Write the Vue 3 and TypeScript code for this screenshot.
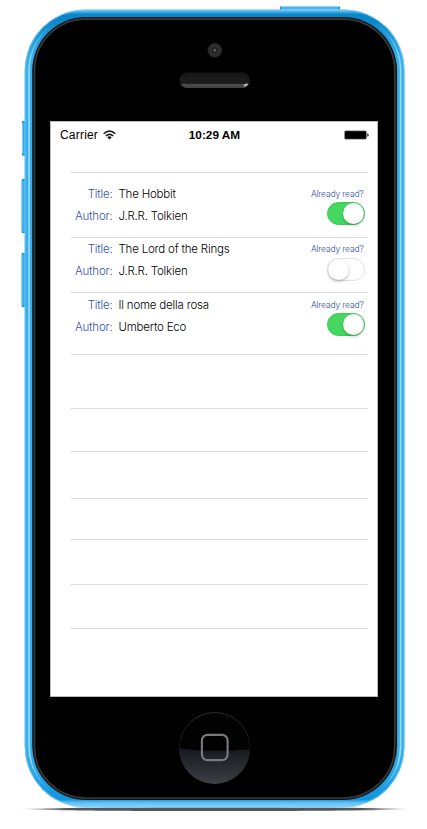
<script setup lang="ts">
interface Book {
  title: string
  author: string
  read: boolean
  height: number
}

const books: Book[] = [
  { title: 'The Hobbit', author: 'J.R.R. Tolkien', read: true, height: 65 },
  { title: 'The Lord of the Rings', author: 'J.R.R. Tolkien', read: false, height: 55 },
  { title: 'Il nome della rosa', author: 'Umberto Eco', read: true, height: 62 },
]

const emptyRows: number[] = [54, 43, 47, 41, 45, 44]
</script>

<template>
  <main class="device">
    <svg class="shell" width="427" height="829" viewBox="0 0 427 829" aria-hidden="true">
      <defs>
        <linearGradient id="edge" x1="0" y1="0" x2="0" y2="1">
          <stop offset="0" stop-color="#7fcff6" />
          <stop offset="0.006" stop-color="#0988cd" />
          <stop offset="0.012" stop-color="#0a85c8" />
          <stop offset="0.06" stop-color="#35aeea" />
          <stop offset="0.93" stop-color="#35aeea" />
          <stop offset="0.99" stop-color="#1295dc" />
          <stop offset="0.994" stop-color="#5fc0f4" />
          <stop offset="1" stop-color="#8dd4fa" />
        </linearGradient>
        <linearGradient id="shine" x1="0" y1="0" x2="0" y2="1">
          <stop offset="0.012" stop-color="#9bdafc" stop-opacity="0" />
          <stop offset="0.07" stop-color="#9bdafc" />
          <stop offset="0.94" stop-color="#9bdafc" />
          <stop offset="0.985" stop-color="#9bdafc" stop-opacity="0" />
        </linearGradient>
        <linearGradient id="ground" x1="0" y1="0" x2="1" y2="0">
          <stop offset="0" stop-color="#555" stop-opacity="0" />
          <stop offset="0.13" stop-color="#555" />
          <stop offset="0.87" stop-color="#555" />
          <stop offset="1" stop-color="#555" stop-opacity="0" />
        </linearGradient>
        <linearGradient id="gloss" x1="0" y1="0" x2="0" y2="1">
          <stop offset="0" stop-color="#15181c" />
          <stop offset="1" stop-color="#3c4045" />
        </linearGradient>
        <linearGradient id="rim" x1="0" y1="0" x2="0" y2="1">
          <stop offset="0" stop-color="#383838" />
          <stop offset="0.45" stop-color="#171717" />
          <stop offset="1" stop-color="#3c4045" />
        </linearGradient>
        <linearGradient id="slot" x1="0" y1="0" x2="0" y2="1">
          <stop offset="0" stop-color="#151515" />
          <stop offset="0.7" stop-color="#1c1c1c" />
          <stop offset="0.76" stop-color="#4c4c4c" />
          <stop offset="1" stop-color="#404040" />
        </linearGradient>
        <radialGradient id="lens">
          <stop offset="0" stop-color="#777" />
          <stop offset="0.18" stop-color="#444" />
          <stop offset="0.34" stop-color="#151515" />
          <stop offset="0.5" stop-color="#333" />
          <stop offset="1" stop-color="#252525" />
        </radialGradient>
        <pattern id="mesh" width="2" height="2" patternUnits="userSpaceOnUse">
          <rect width="2" height="2" fill="#111" />
          <rect width="1" height="1" fill="#252525" />
          <rect x="1" y="1" width="1" height="1" fill="#252525" />
        </pattern>
        <filter id="soft" x="-5%" y="-100%" width="110%" height="300%">
          <feGaussianBlur stdDeviation="1 0.7" />
        </filter>
      </defs>

      <path d="M18 809 C60 806.5 370 806.5 412 809 C370 811.8 60 811.8 18 809Z" fill="url(#ground)" filter="url(#soft)" />

      <g fill="#35aeea">
        <rect x="280" y="6" width="60" height="6" rx="1" fill="#48b6ec" />
        <path d="M281 6.500H339" stroke="#8ed6f8" />
        <path d="M280.500 7V10M339.500 7V10" stroke="#168dca" />
        <rect x="22" y="121" width="5" height="34.500" rx="1" />
        <rect x="21.500" y="179" width="5.500" height="54" rx="1" />
        <rect x="21.500" y="253" width="5.500" height="54" rx="1" />
        <path d="M22.500 124V153M22 182V230M22 256V304" stroke="#74caf4" />
        <path d="M22 121.500H25M22 155H25M22 179.500H25M22 232.500H25M22 253.500H25M22 306.500H25" stroke="#1a94d6" />
      </g>

      <rect x="24.700" y="9.500" width="379.800" height="798" rx="61" fill="url(#edge)" />
      <rect x="25.100" y="9.900" width="379" height="797.200" rx="60.500" fill="none" stroke="#7ccdf6" stroke-width="0.800" />
      <rect x="29.100" y="13.800" width="371.500" height="789.500" rx="57" fill="none" stroke="url(#shine)" stroke-width="1.600" />
      <rect x="32.200" y="17" width="364.900" height="783" rx="54" fill="#10151a" />
      <rect x="34.500" y="19.100" width="360.200" height="778.900" rx="51.500" fill="#000" stroke="#383838" stroke-width="1.600" />

      <circle cx="214.800" cy="50.300" r="7.300" fill="url(#lens)" />
      <rect x="179.500" y="72.500" width="70.500" height="15.500" rx="7.750" fill="url(#slot)" />
      <rect x="184" y="77" width="62" height="6.500" rx="3" fill="url(#mesh)" />
      <path d="M243.800 85.800Q246.500 85.500 247.300 83.800" fill="none" stroke="#aaa" stroke-width="2.600" />

      <circle cx="214.600" cy="747.800" r="35.300" fill="#020202" stroke="url(#rim)" stroke-width="0.800" />
      <path d="M179.300 748.500Q215 753 249.900 748.900A35.300 35.300 0 0 1 179.300 748.500Z" fill="url(#gloss)" />
      <rect x="201.900" y="734.900" width="25.700" height="25.200" rx="5.500" fill="none" stroke="#777b7e" stroke-width="2.100" />
    </svg>

    <section class="screen">
      <header class="status">
        <div class="carrier">
          <span>Carrier</span>
          <svg width="13" height="10" viewBox="0 0 13 10" fill="none" stroke="#111" stroke-width="1.500">
            <path d="M0.700 3.800Q6.500 -1.700 12.300 3.800M2.800 6Q6.500 2.700 10.200 6" />
            <path d="M4.300 7.300Q6.500 5.400 8.700 7.300L6.500 9.500Z" fill="#111" stroke="none" />
          </svg>
        </div>
        <time class="clock">10:29 AM</time>
        <svg class="battery" width="25" height="10" viewBox="0 0 25 10">
          <rect x="0.200" y="0.500" width="22.600" height="9" rx="1.500" fill="#777" />
          <rect x="1" y="1.200" width="21" height="7.600" rx="0.700" fill="#000" />
          <path d="M23.300 3.200Q24.700 3.600 24.700 5T23.300 6.800Z" fill="#111" />
        </svg>
      </header>

      <div class="list">
        <article v-for="book in books" :key="book.title" class="row" :style="{ height: book.height + 'px' }">
          <dl class="details">
            <dt>Title:</dt>
            <dd>{{ book.title }}</dd>
            <dt>Author:</dt>
            <dd>{{ book.author }}</dd>
          </dl>
          <div class="read">
            <span>Already read?</span>
            <div class="switch" :class="{ on: book.read }"><i class="knob" /></div>
          </div>
        </article>
        <div v-for="(height, index) in emptyRows" :key="index" class="row" :style="{ height: height + 'px' }" />
      </div>
    </section>
  </main>
</template>

<style>
body {
  background: #fff;
}
</style>

<style scoped>
.device {
  display: grid;
  width: 427px;
  height: 829px;
  overflow: hidden;
  font-family: Inter, "Liberation Sans", sans-serif;
}

.shell,
.screen {
  grid-area: 1 / 1;
}

.shell {
  display: block;
}

.screen {
  box-sizing: border-box;
  width: 328px;
  height: 576px;
  margin: 121px 0 0 50px;
  background: #fff;
  border: 1px solid #b8b8b8;
}

.status {
  display: grid;
  grid-template-columns: 1fr auto 1fr;
  align-items: center;
  height: 20px;
  margin-top: 3px;
  padding: 0 8px 0 9px;
  color: #000;
}

.carrier {
  display: flex;
  align-items: center;
  gap: 5px;
  font: 12px/20px "Liberation Sans", sans-serif;
  letter-spacing: 0.200px;
}

.clock {
  font: bold 11.800px/20px "Liberation Sans", sans-serif;
}

.battery {
  justify-self: end;
}

.list {
  box-sizing: border-box;
  width: 297px;
  margin: 27px 0 0 20px;
  border-top: 1px solid #dadada;
}

.row {
  display: flex;
  box-sizing: border-box;
  justify-content: space-between;
  align-items: flex-start;
  border-bottom: 1px solid #dadada;
}

.row:first-child {
  padding-top: 10px;
}

.row:nth-child(3) {
  padding-top: 1px;
}

.details {
  display: grid;
  grid-template-columns: 41.500px auto;
  column-gap: 6px;
  margin: 0;
  padding-top: 1px;
  font-size: 11.500px;
  font-weight: 300;
  line-height: 21.500px;
  letter-spacing: -0.200px;
  white-space: nowrap;
}

.details dt {
  color: #3452ae;
  text-align: right;
}

.details dd {
  margin: 0;
  color: #000;
}

.read {
  display: flex;
  flex-direction: column;
  align-items: flex-end;
  padding: 5px 3px 0 0;
  color: #3452ae;
  font-size: 8.600px;
  font-weight: 300;
  line-height: 13px;
  letter-spacing: -0.200px;
}

.read span {
  margin-right: 1.500px;
}

.switch {
  display: flex;
  box-sizing: border-box;
  width: 38px;
  height: 23px;
  margin-top: 1px;
  border: 1px solid #e0e0e0;
  border-radius: 12px;
  background: #fff;
}

.row:nth-child(2) .switch {
  margin-top: 2px;
}

.switch.on {
  justify-content: flex-end;
  border-color: #38ce55;
  background: #45d75f;
}

.knob {
  width: 21px;
  height: 21px;
  border-radius: 50%;
  background: #fff;
  box-shadow: 0 2px 3px rgba(0, 0, 0, 0.200), 0 0 1px rgba(0, 0, 0, 0.200);
}
</style>
